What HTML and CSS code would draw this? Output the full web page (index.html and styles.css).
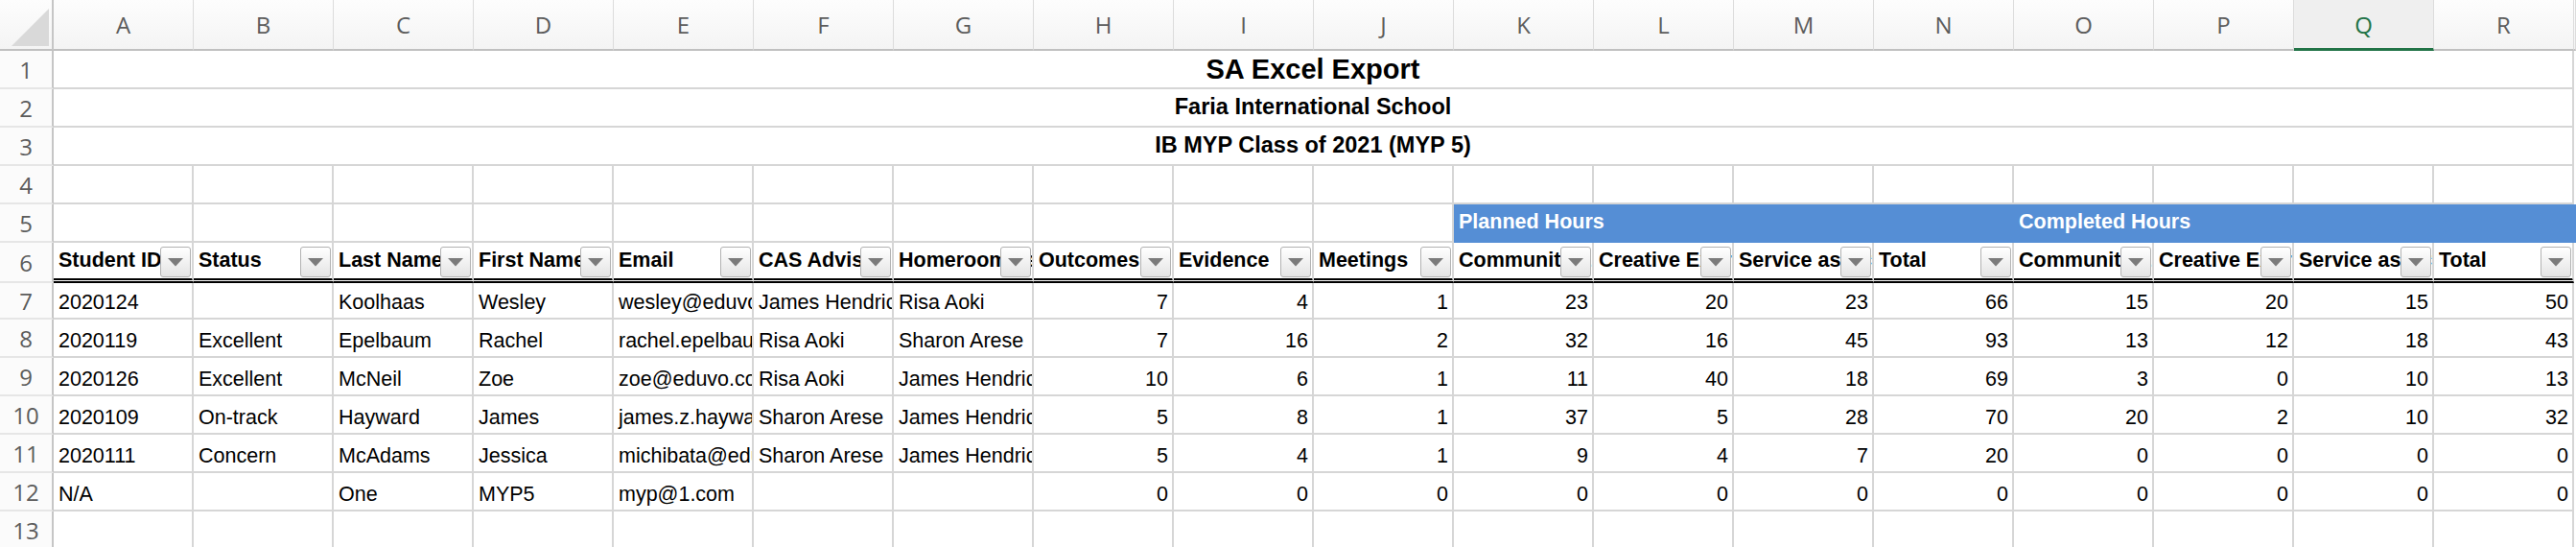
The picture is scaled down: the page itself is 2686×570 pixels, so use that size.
FILE: index.html
```html
<!DOCTYPE html>
<html lang="en">
<head>
    <meta charset="UTF-8">
    <meta name="viewport" content="width=device-width, initial-scale=1.0">
    <title>SA Excel Export</title>
    <link rel="stylesheet" href="styles.css">
</head>
<body>

<div class="sheet" id="sheet"></div>

<script>
    const kolom = "ABCDEFGHIJKLMNOPQR".split("");
    const kolomAktif = "Q";

    const judul = [
        ["SA Excel Export", "title"],
        ["Faria International School", "subtitle"],
        ["IB MYP Class of 2021 (MYP 5)", "subtitle"]
    ];

    const headerKolom = [
        "Student ID", "Status", "Last Name", "First Name", "Email", "CAS Advisor",
        "Homeroom Teacher", "Outcomes", "Evidence", "Meetings",
        "Community Engagement", "Creative Expression", "Service as Action", "Total",
        "Community Engagement", "Creative Expression", "Service as Action", "Total"
    ];

    // 7 kolom pertama teks, sisanya angka (rata kanan)
    const siswa = [
        ["2020124", "", "Koolhaas", "Wesley", "wesley@eduvo.com", "James Hendricks", "Risa Aoki", 7, 4, 1, 23, 20, 23, 66, 15, 20, 15, 50],
        ["2020119", "Excellent", "Epelbaum", "Rachel", "rachel.epelbaum@eduvo.com", "Risa Aoki", "Sharon Arese", 7, 16, 2, 32, 16, 45, 93, 13, 12, 18, 43],
        ["2020126", "Excellent", "McNeil", "Zoe", "zoe@eduvo.com", "Risa Aoki", "James Hendricks", 10, 6, 1, 11, 40, 18, 69, 3, 0, 10, 13],
        ["2020109", "On-track", "Hayward", "James", "james.z.hayward@eduvo.com", "Sharon Arese", "James Hendricks", 5, 8, 1, 37, 5, 28, 70, 20, 2, 10, 32],
        ["2020111", "Concern", "McAdams", "Jessica", "michibata@eduvo.com", "Sharon Arese", "James Hendricks", 5, 4, 1, 9, 4, 7, 20, 0, 0, 0, 0],
        ["N/A", "", "One", "MYP5", "myp@1.com", "", "", 0, 0, 0, 0, 0, 0, 0, 0, 0, 0, 0]
    ];

    const sheet = document.getElementById("sheet");

    function buatSel(kelas, isi) {
        const sel = document.createElement("div");
        sel.className = kelas;
        if (isi !== undefined && isi !== "") sel.textContent = isi;
        sheet.appendChild(sel);
        return sel;
    }

    function tombolFilter() {
        const btn = document.createElement("span");
        btn.className = "filter-btn";
        btn.innerHTML = '<svg width="16" height="9" viewBox="0 0 16 9"><polygon points="0,0 16,0 8,8.5" fill="#7b7b7b"/></svg>';
        return btn;
    }

    // baris huruf kolom
    const pojok = buatSel("corner");
    pojok.innerHTML = '<svg width="54" height="51" viewBox="0 0 54 51"><polygon points="51,9 51,48 12,48" fill="#d9d9d9"/></svg>';
    kolom.forEach(function (huruf) {
        buatSel(huruf === kolomAktif ? "col-head active" : "col-head", huruf);
    });
    buatSel("col-head");

    let nomor = 1;

    // baris 1-3: judul yang digabung
    judul.forEach(function (j) {
        buatSel("row-head", nomor++);
        buatSel("cell merged " + j[1], j[0]);
        buatSel("edge");
    });

    // baris 4: kosong
    buatSel("row-head", nomor++);
    kolom.forEach(function () { buatSel("cell"); });
    buatSel("edge");

    // baris 5: grup jam
    buatSel("row-head", nomor++);
    for (let i = 0; i < 10; i++) buatSel("cell");
    buatSel("cell band span-4", "Planned Hours");
    buatSel("cell band span-4", "Completed Hours");
    buatSel("edge band");

    // baris 6: header tabel dengan filter
    buatSel("row-head", nomor++);
    headerKolom.forEach(function (teks) {
        const sel = buatSel("cell field", teks);
        sel.appendChild(tombolFilter());
    });
    buatSel("edge");

    // baris data siswa
    siswa.forEach(function (baris) {
        buatSel("row-head", nomor++);
        baris.forEach(function (nilai, idx) {
            buatSel(idx >= 7 ? "cell num" : "cell", String(nilai));
        });
        buatSel("edge");
    });

    // baris 13: kosong
    buatSel("row-head", nomor++);
    kolom.forEach(function () { buatSel("cell"); });
    buatSel("edge");
</script>

</body>
</html>
```

FILE: styles.css
```css
/* Halaman */
body {
    margin: 0;
    background-color: #fff;
    overflow: hidden;
}

/* Grid lembar kerja */
.sheet {
    display: grid;
    grid-template-columns: 56px repeat(18, 146px) 1fr;
    grid-template-rows: 53px repeat(5, 40px) 42px 38px repeat(6, 40px);
    font-family: "Liberation Sans", Arial, sans-serif;
    font-size: 21.5px;
    color: #000;
}

/* Pojok kiri atas */
.corner {
    box-sizing: border-box;
    border-right: 2px solid #c6c6c6;
    border-bottom: 2px solid #c0c0c0;
    background: linear-gradient(#fdfdfd, #f4f4f4);
}

.corner svg {
    display: block;
}

/* Huruf kolom dan nomor baris */
.col-head,
.row-head {
    box-sizing: border-box;
    display: flex;
    align-items: center;
    justify-content: center;
    font-family: "Open Sans", "Noto Sans", sans-serif;
    font-size: 24px;
    color: #5c5c5c;
}

.col-head {
    border-right: 1px solid #dcdcdc;
    border-bottom: 2px solid #c0c0c0;
    background: linear-gradient(#fdfdfd, #f4f4f4);
}

.col-head.active {
    background: #efefef;
    color: #217346;
    border-bottom: 3px solid #217346;
}

.row-head {
    border-right: 2px solid #c6c6c6;
    border-bottom: 2px solid #e6e6e6;
    background-color: #fbfbfb;
}

/* Sel biasa */
.cell {
    position: relative;
    box-sizing: border-box;
    display: flex;
    align-items: flex-end;
    padding: 0 5px 5px;
    border-right: 2px solid #d6d6d6;
    border-bottom: 2px solid #d6d6d6;
    line-height: 1;
    white-space: nowrap;
    overflow: hidden;
}

.cell.num {
    justify-content: flex-end;
    padding-right: 4px;
}

.edge {
    background-color: #fff;
}

/* Judul yang digabung A:R */
.cell.merged {
    grid-column: span 18;
    justify-content: center;
    align-items: center;
    padding-bottom: 0;
    font-weight: bold;
}

.cell.title {
    font-size: 29px;
}

.cell.subtitle {
    font-size: 23.5px;
}

/* Pita biru Planned / Completed Hours */
.span-4 {
    grid-column: span 4;
}

.band {
    background-color: #558ed5;
    color: #fff;
    font-weight: bold;
}

.cell.band {
    align-items: center;
    padding-bottom: 0;
    border-color: transparent;
}

/* Header tabel */
.cell.field {
    align-items: center;
    padding-bottom: 0;
    font-weight: bold;
    border-bottom: 5px double #000;
}

.filter-btn {
    position: absolute;
    top: 4px;
    right: 1px;
    width: 32px;
    height: 32px;
    box-sizing: border-box;
    display: flex;
    align-items: center;
    justify-content: center;
    border: 1px solid #b2b2b2;
    border-radius: 3px;
    background: linear-gradient(#ffffff, #e4e4e4);
}

.filter-btn svg {
    display: block;
}
```
